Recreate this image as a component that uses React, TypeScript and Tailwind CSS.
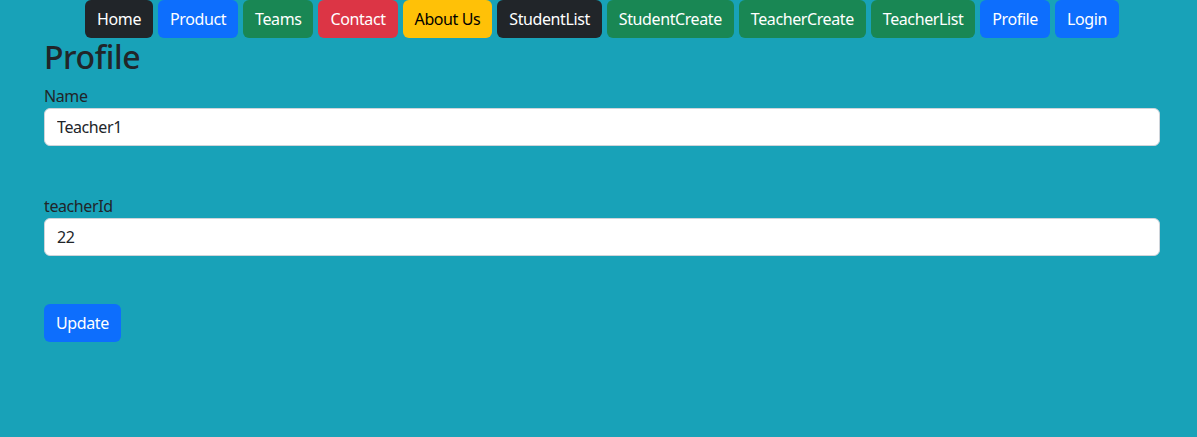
import { useState } from "react";

const NAV = [
  { label: "Home", cls: "bg-[#212529] text-white" },
  { label: "Product", cls: "bg-[#0d6efd] text-white" },
  { label: "Teams", cls: "bg-[#198754] text-white" },
  { label: "Contact", cls: "bg-[#dc3545] text-white" },
  { label: "About Us", cls: "bg-[#ffc107] text-black" },
  { label: "StudentList", cls: "bg-[#212529] text-white" },
  { label: "StudentCreate", cls: "bg-[#198754] text-white" },
  { label: "TeacherCreate", cls: "bg-[#198754] text-white" },
  { label: "TeacherList", cls: "bg-[#198754] text-white" },
  { label: "Profile", cls: "bg-[#0d6efd] text-white" },
  { label: "Login", cls: "bg-[#0d6efd] text-white" },
];

export default function App() {
  const [name, setName] = useState("Teacher1");
  const [teacherId, setTeacherId] = useState("22");

  return (
    <div
      className="min-h-[437px] bg-[#18a2b8] tracking-[-0.025em] text-[#212529]"
      style={{ fontFamily: '"Noto Sans", "Open Sans", sans-serif' }}
    >
      <nav className="flex justify-center gap-[5px] pl-[7px]">
        {NAV.map((item) => (
          <button
            key={item.label}
            className={`h-[38px] rounded-[6px] px-3 text-[16px] leading-6 tracking-[-0.025em] ${item.cls}`}
          >
            {item.label}
          </button>
        ))}
      </nav>

      <div className="ml-[44px] w-[1116px]">
        <h2 className="mb-2 h-[38px] text-[32px] font-medium leading-[38px]">
          Profile
        </h2>

        <label className="block text-[16px] leading-6">Name</label>
        <input
          value={name}
          onChange={(e) => setName(e.target.value)}
          className="block h-[38px] w-full rounded-[6px] border border-[#ced4da] bg-white px-3 text-[16px] tracking-[-0.025em] text-[#212529] outline-none"
        />

        <div className="h-12" />

        <label className="block text-[16px] leading-6">teacherId</label>
        <input
          value={teacherId}
          onChange={(e) => setTeacherId(e.target.value)}
          className="block h-[38px] w-full rounded-[6px] border border-[#ced4da] bg-white px-3 text-[16px] tracking-[-0.025em] text-[#212529] outline-none"
        />

        <div className="h-12" />

        <button className="h-[38px] rounded-[6px] bg-[#0d6efd] px-3 text-[16px] leading-6 tracking-[-0.025em] text-white">
          Update
        </button>
      </div>
    </div>
  );
}
